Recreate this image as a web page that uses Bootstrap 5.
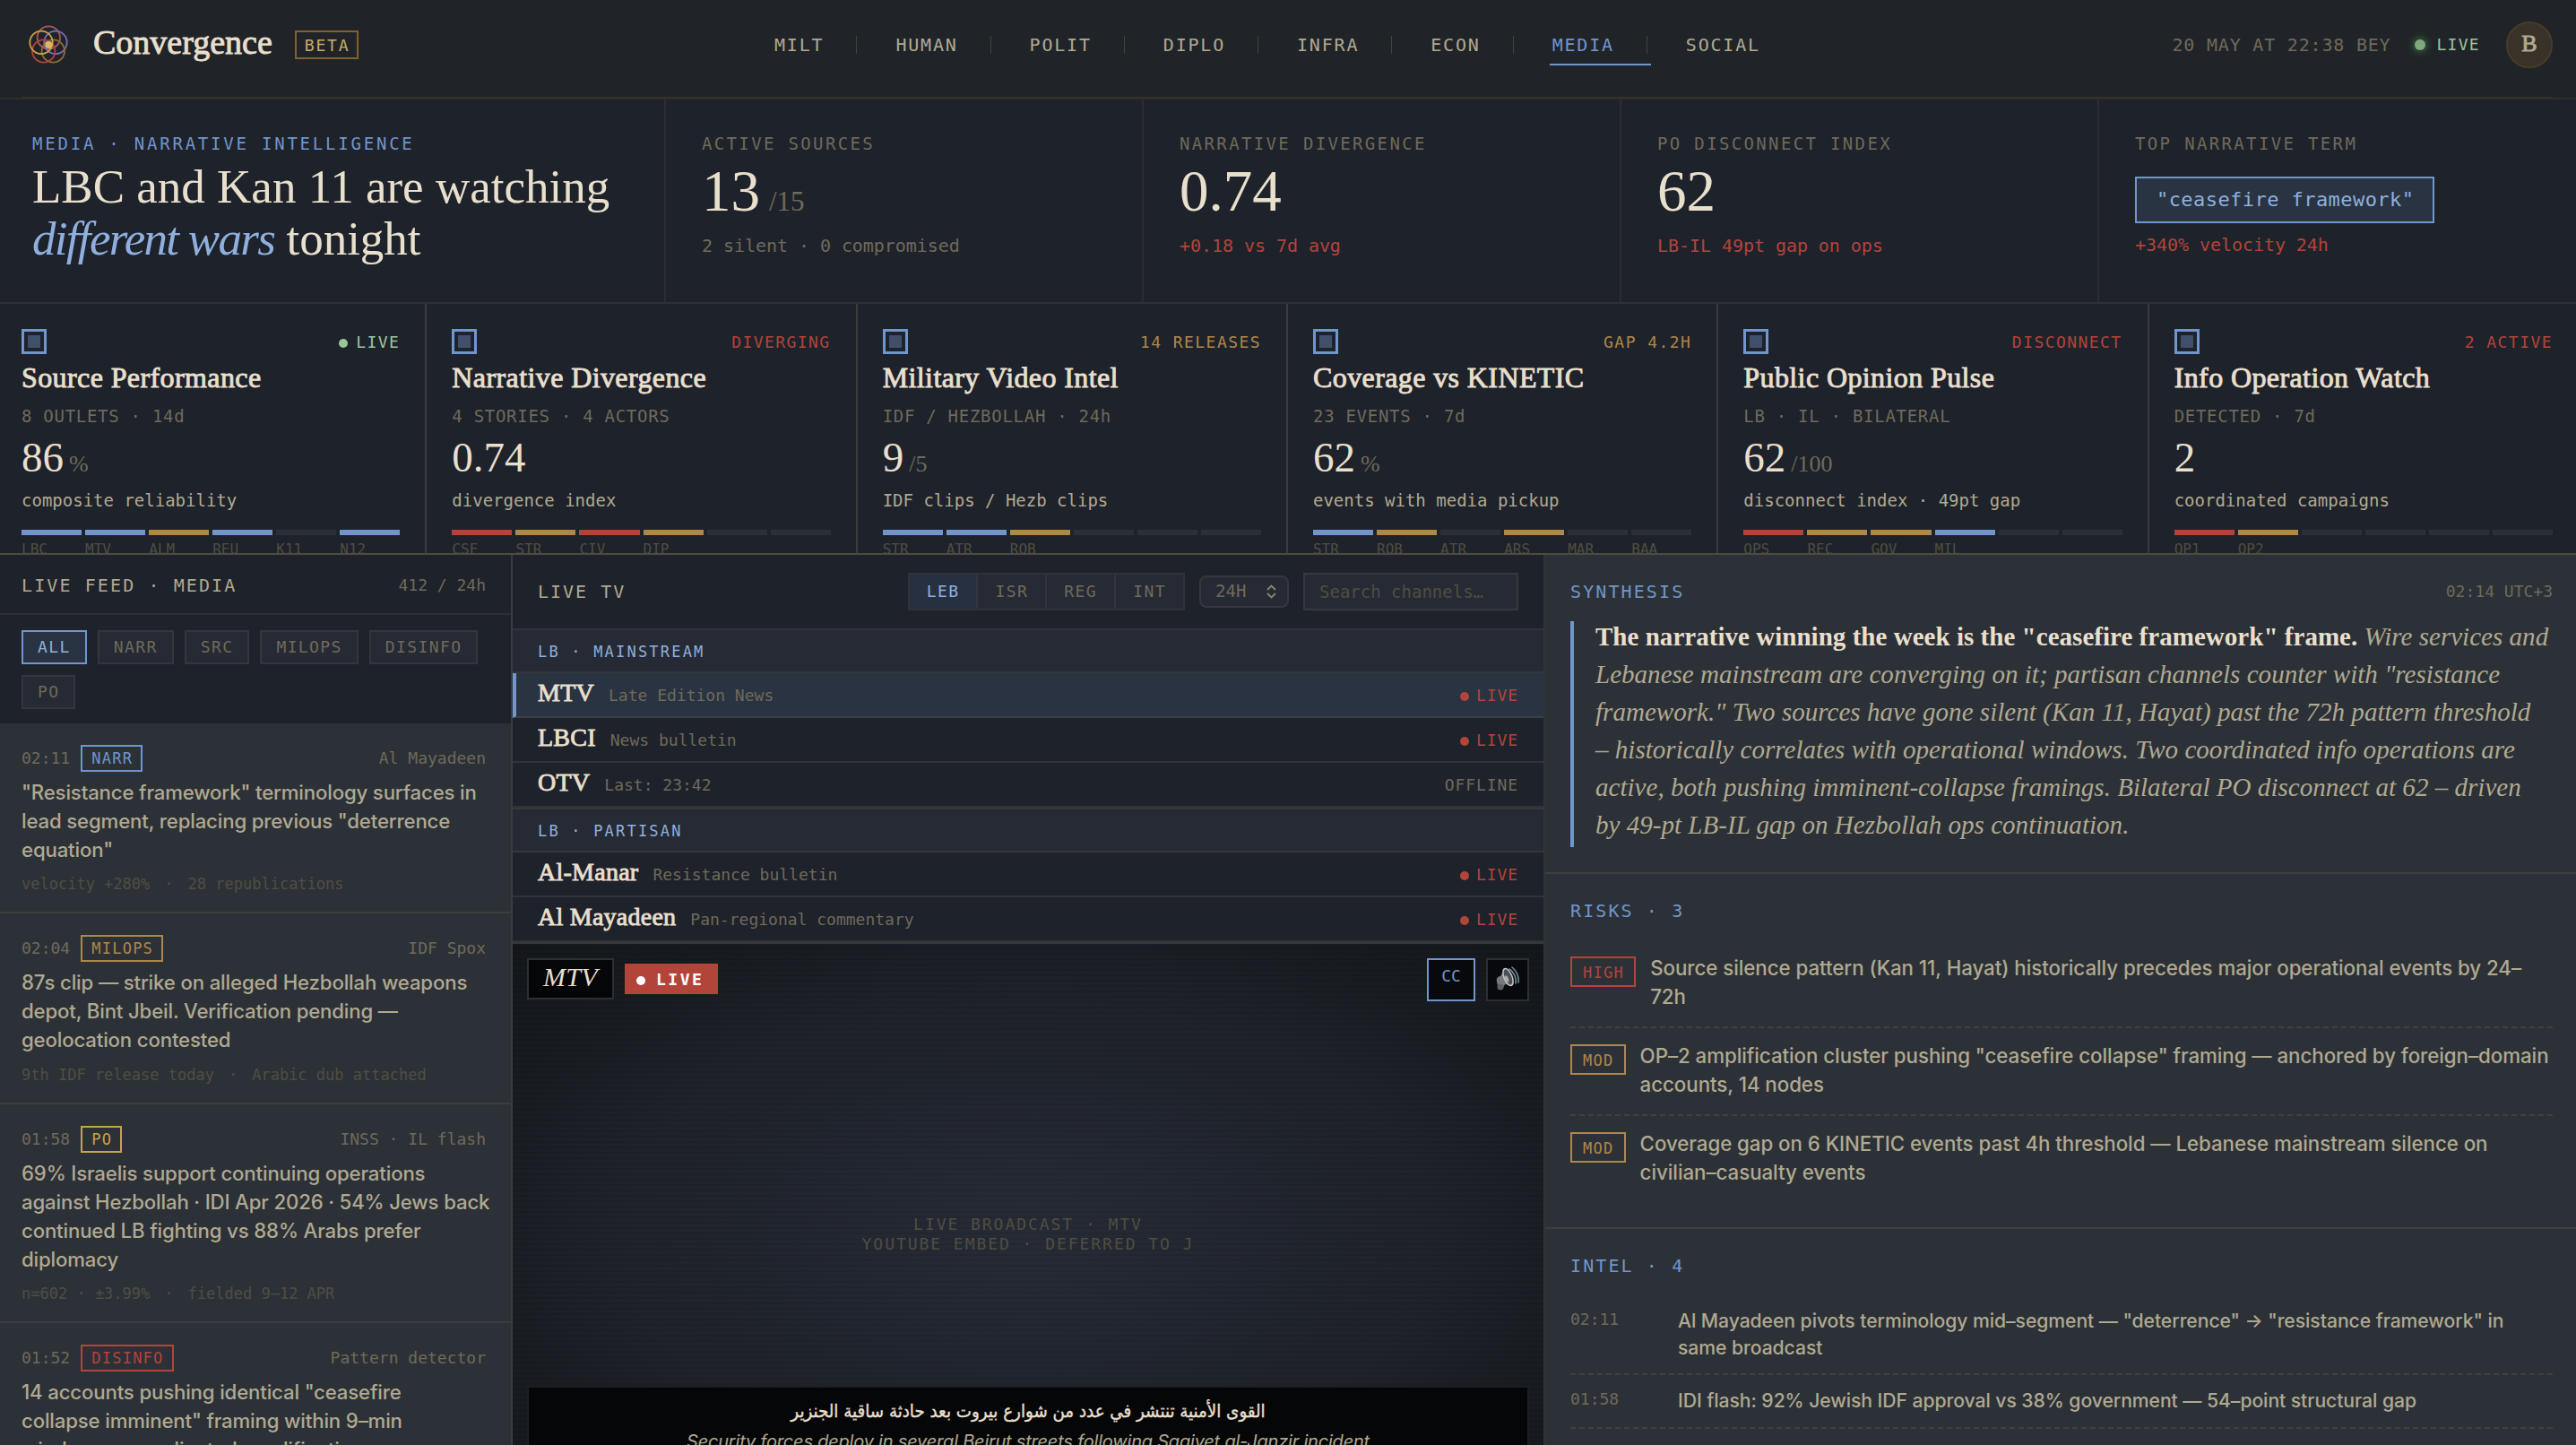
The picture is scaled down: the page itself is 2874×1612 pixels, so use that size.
<!DOCTYPE html>
<html lang="en">
  <head>
    <meta charset="UTF-8" />
    <meta name="viewport" content="width=device-width, initial-scale=1.0" />
    <title>Convergence - Media</title>
    <link
      rel="stylesheet"
      href="https://cdn.jsdelivr.net/npm/bootstrap@5.3.2/dist/css/bootstrap.min.css"
    />
    <style>
      :root {
        --ink: #e8dfcc;
        --soft: #b0a991;
        --dim: #6f6a5a;
        --faint: #504e42;
        --blue: #7096cc;
        --sky: #8fb0de;
        --red: #b3443a;
        --amber: #b0874a;
        --gold: #c9a24a;
        --green: #9cc59a;
        --base: #1e222b;
        --panel: #2c3137;
        --raised: #262a34;
        --line: #323338;
      }
      body {
        height: 1612px;
        overflow: hidden;
        background: var(--base);
        color: var(--soft);
        font-family: "Inter", sans-serif;
      }
      .mono { font-family: "DejaVu Sans Mono", monospace; font-size: 19px; line-height: 20px; white-space: nowrap; }
      .serif { font-family: "Liberation Serif", serif; color: var(--ink); white-space: nowrap; }
      .medium { -webkit-text-stroke: .9px currentColor; }
      .c-dim { color: var(--dim); }
      .c-faint { color: var(--faint); }
      .c-soft { color: var(--soft); }
      .c-blue { color: var(--blue); }
      .c-sky { color: var(--sky); }
      .c-red { color: var(--red); }
      .c-amber { color: var(--amber); }
      .c-gold { color: var(--gold); }
      .c-green { color: var(--green); }

      /* top bar */
      .topbar { height: 111px; background: #202428; border-bottom: 2px solid #2e2c29; padding: 0 26px 10px 24px; position: relative; }
      .topbar::after { content: ""; position: absolute; left: 24px; right: 26px; bottom: 0; height: 1px; background: #38342b; }
      .brand-side { width: 837px; }
      .brand-name { font-size: 38px; line-height: 40px; margin: -5px 0 0 20px; letter-spacing: 0; }
      .beta { font-size: 18px; letter-spacing: 1.8px; color: #c9ad68; border: 2px solid #80622d; height: 32px; line-height: 29px; padding: 0 8px 0 9px; margin-left: 25px; }
      .topnav { gap: 36px; }
      .topnav a { height: 45px; margin-top: 2px; padding: 0 4px 0 3px; font-size: 20px; letter-spacing: 1.8px; color: var(--soft); text-decoration: none; border-bottom: 2px solid transparent; }
      .topnav a i { width: 1px; height: 20px; background: #45413a; margin-left: 36px; }
      .topnav a.on { color: var(--blue); border-color: var(--blue); }
      .pulse { width: 12px; height: 12px; background: #7fa87e; border-radius: 50%; box-shadow: 0 0 10px #4f9350; }
      .avatar { width: 52px; height: 52px; border: 2px solid #473c28; background: #383228; border-radius: 50%; font-size: 26px; line-height: 46px; color: var(--soft); }

      /* hero */
      .hero { height: 228px; border-bottom: 2px solid #2f3035; }
      .hero > div { padding: 39px 0 0 40px; width: 533px; border-right: 2px solid #2b2d33; }
      .hero > div:first-child { width: 743px; padding-left: 36px; }
      .hero > div:last-child { border-right: 0; width: 532px; }
      .kpi-label { letter-spacing: 2.35px; }
      .headline { font-size: 53px; line-height: 58px; margin-top: 9px; letter-spacing: 0; }
      .headline em { color: var(--sky); letter-spacing: -1.7px; }
      .kpi-num { font-size: 65px; line-height: 64px; height: 64px; margin: 11px 0 19px; }
      .kpi-num small { font-size: 31px; line-height: 1; color: var(--dim); margin-left: 10px; }
      .kpi-note { font-size: 20px; letter-spacing: -.05px; }
      .term { display: inline-block; height: 52px; line-height: 47px; font-size: 22px; letter-spacing: .44px; padding: 0 21px 0 22px; border: 2px solid var(--blue); background: #2a3341; color: var(--sky); margin: 27px 0 14px; }

      /* indicator cards */
      .strip { height: 280px; overflow: hidden; padding: 0 26px 0 0; border-bottom: 2px solid #4e4c43; }
      .ind { flex: 1 1 0; padding: 28px 28px 0; border-right: 2px solid #3a3b3d; }
      .ind:first-child { padding-left: 24px; }
      .ind:last-child { padding-right: 0; border: 0; }
      .ind-icon { width: 28px; height: 28px; border: 3px solid var(--blue); padding: 4px; }
      .ind-icon::after { content: ""; display: block; width: 14px; height: 14px; background: #40506b; }
      .ind-status { font-size: 18px; letter-spacing: 1.44px; padding-top: 2px; }
      .dot { display: inline-block; width: 10px; height: 10px; border-radius: 50%; background: currentColor; }
      .ind-title { font-size: 32px; line-height: 32px; margin-top: 10px; letter-spacing: .4px; }
      .ind-sub { letter-spacing: .72px; margin-top: 17px; }
      .ind-num { font-size: 47px; line-height: 48px; height: 48px; margin-top: 12px; }
      .ind-num small { font-size: 26px; line-height: 1; color: var(--dim); margin-left: 6px; }
      .ind-metric { margin: 14px 0 23px; }
      .segs { gap: 4px; }
      .segs > div { flex: 1 1 0; }
      .segs i { display: block; height: 6px; background: #2b2f37; margin-bottom: 8px; }
      .segs i.b { background: var(--blue); }
      .segs i.a { background: var(--amber); }
      .segs i.r { background: var(--red); }
      .segs span { font-size: 16px; line-height: 16px; display: block; }

      /* live feed */
      .feed { width: 572px; height: 993px; border-right: 2px solid #3a3b3d; background: var(--panel); overflow: hidden; }
      .feed-head { height: 67px; padding: 24px 28px 0 24px; border-bottom: 2px solid #2c2e34; background: var(--base); }
      .filters { gap: 12px; padding: 17px 24px 16px; background: var(--base); }
      .filters span { font-size: 18px; letter-spacing: 1.4px; height: 38px; line-height: 34px; padding: 0 16px; border: 2px solid #34363a; background: var(--raised); color: var(--dim); }
      .filters span.on { border-color: var(--blue); background: #2a3341; color: var(--sky); }
      .story { padding: 24px 28px 19px 24px; border-bottom: 2px solid #3c3c3c; }
      .story .mono { font-size: 18px; }
      .story .tag { font-size: 17px; letter-spacing: 1.25px; height: 30px; line-height: 26px; padding: 0 9px 0 10px; border: 2px solid; margin-left: 12px; }
      .story p { font-size: 22.2px; font-weight: 450; line-height: 32.1px; margin: 7px 0 12px; white-space: nowrap; letter-spacing: -.15px; }
      .story .foot { font-size: 17px; line-height: 21px; height: 22px; gap: 16px; }

      /* live tv */
      .tv { width: 1150px; height: 993px; overflow: hidden; }
      .tv-head { height: 84px; border-bottom: 2px solid var(--line); padding: 0 28px; gap: 16px; }
      .seg { border: 2px solid #313236; }
      .seg span { font-size: 18px; letter-spacing: 1.44px; height: 38px; line-height: 37px; padding: 0 19px; background: var(--raised); color: var(--dim); border-right: 2px solid #34353a; }
      .seg span:last-child { border: 0; }
      .seg span.on { background: #273040; color: var(--sky); }
      .range { width: 100px; height: 36px; border: 2px solid #37383c; border-radius: 8px; padding: 0 12px 0 16px; background: var(--raised); }
      .search { width: 240px; height: 42px; line-height: 38px; border: 2px solid #37383b; background: var(--raised); padding-left: 16px; }
      .group-name { height: 48px; padding: 14px 28px 0; font-size: 17px; letter-spacing: 2.2px; background: var(--raised); border-bottom: 2px solid #35363a; }
      .chan { height: 50px; padding: 0 28px; border-bottom: 2px solid var(--line); line-height: 43px; }
      .chan b { font-size: 28px; font-weight: 400; letter-spacing: .25px; }
      .chan .mono { font-size: 18px; line-height: 20px; }
      .chan.on { background: #293342; border-left: 4px solid var(--blue); padding-left: 24px; border-bottom-color: #3a3f45; }
      .group { border-bottom: 2px solid #36373a; }
      .video { height: 647px; position: relative; color: var(--faint);
        background: repeating-linear-gradient(rgba(0,0,0,0) 0 4px, rgba(0,0,0,.08) 4px 6px), radial-gradient(ellipse at center, #272b36 0%, #1e222a 55%, #13161a 100%); }
      .over { position: absolute; }
      .station { left: 16px; top: 16px; height: 46px; width: 97px; border: 2px solid #2e2f33; background: #050608; font-size: 30px; line-height: 38px; text-align: center; font-style: italic; letter-spacing: .4px; }
      .onair { left: 125px; top: 22px; width: 104px; height: 34px; background: var(--red); color: #fff; font-size: 18px; line-height: 35px; letter-spacing: 2.5px; font-weight: 700; padding-left: 13px; }
      .cc { right: 76px; top: 16px; width: 54px; height: 48px; border: 2px solid var(--blue); background: #08090c; color: var(--blue); font-size: 18px; line-height: 36px; text-align: center; }
      .sound { right: 16px; top: 16px; width: 48px; height: 48px; border: 2px solid #2e2f33; background: #08090c; }
      .captions { left: 16px; right: 16px; top: 493px; height: 138px; border: 2px solid #1d1e20; background: #050607; text-align: center; padding-top: 9px; }
      .captions .ar { font-family: "DejaVu Sans Condensed", "DejaVu Sans", sans-serif; font-stretch: condensed; font-size: 20.3px; line-height: 34px; color: var(--ink); -webkit-text-stroke: .4px currentColor; }
      .captions .en { font-size: 20px; letter-spacing: -.2px; line-height: 35px; font-style: italic; color: var(--soft); white-space: nowrap; }

      /* analysis */
      .brief { flex: 1; height: 993px; background: var(--panel); overflow: hidden; border-left: 2px solid #303439; }
      .brief section { border-bottom: 2px solid #3e3e3e; padding: 31px 26px 28px 28px; }
      .sec-name { font-size: 20px; letter-spacing: 2.1px; }
      .quote { border-left: 4px solid var(--blue); padding: 0 0 4px 24px; margin-top: 23px; font-size: 29px; line-height: 42px; }
      .quote p { margin: -4px 0 0; color: var(--soft); letter-spacing: .03px; }
      .quote strong { color: var(--ink); font-weight: 700; font-style: normal; }
      .brief h2 { margin: 0 0 23px; font-weight: 400; }
      .risk { padding: 15px 0 17px; gap: 16px; font-size: 22.3px; line-height: 32px; border-bottom: 2px dashed #3f4041; white-space: nowrap; }
      .risk > div, .note > div { font-weight: 450; letter-spacing: -.05px; }
      .risk:last-child, .note:last-child { border: 0; }
      .risk .mono { font-size: 17px; letter-spacing: 1.3px; height: 34px; line-height: 32px; padding: 0 11px 0 12px; border: 2px solid; margin-top: 3px; }
      .note { padding: 14px 0; font-size: 21.15px; line-height: 29.7px; border-bottom: 2px dashed #3f4041; white-space: nowrap; }
      .note .mono { width: 120px; font-size: 18px; padding-top: 3px; }
    </style>
  </head>
  <body>
    <header class="topbar d-flex align-items-center">
      <div class="brand-side d-flex align-items-center">
        <svg width="60" height="56" viewBox="0 0 60 56" fill="none" stroke-width="1.8" class="flex-shrink-0">
          <circle cx="30.3" cy="20" r="12.7" stroke="#a85a5a" />
          <circle cx="38" cy="25.3" r="12.7" stroke="#7a6bb8" />
          <circle cx="35.3" cy="35" r="12.7" stroke="#8f6a3a" />
          <circle cx="24.7" cy="35" r="12.7" stroke="#b3443a" />
          <circle cx="22" cy="25.3" r="12.7" stroke="#c9a24a" />
          <circle cx="30.3" cy="28" r="4" fill="#d9b866" />
        </svg>
        <div class="serif medium brand-name">Convergence</div>
        <div class="mono beta">BETA</div>
      </div>
      <nav class="topnav d-flex mono">
        <a href="#" class="d-flex align-items-center">MILT<i></i></a>
        <a href="#" class="d-flex align-items-center">HUMAN<i></i></a>
        <a href="#" class="d-flex align-items-center">POLIT<i></i></a>
        <a href="#" class="d-flex align-items-center">DIPLO<i></i></a>
        <a href="#" class="d-flex align-items-center">INFRA<i></i></a>
        <a href="#" class="d-flex align-items-center">ECON<i></i></a>
        <a href="#" class="d-flex align-items-center on">MEDIA<i></i></a>
        <a href="#" class="d-flex align-items-center">SOCIAL</a>
      </nav>
      <div class="ms-auto d-flex align-items-center mono">
        <span class="c-dim" style="font-size: 20px; letter-spacing: .8px">20 MAY AT 22:38 BEY</span>
        <span class="pulse" style="margin: 0 12px 0 27px"></span>
        <span class="c-green" style="font-size: 18px; letter-spacing: 1.3px; margin-right: 29px">LIVE</span>
        <span class="avatar serif medium text-center">B</span>
      </div>
    </header>

    <div class="hero d-flex">
      <div>
        <div class="mono kpi-label c-blue" style="letter-spacing: 2.78px">MEDIA · NARRATIVE INTELLIGENCE</div>
        <div class="serif headline">LBC and Kan 11 are watching<br /><em>different wars</em> tonight</div>
      </div>
      <div>
        <div class="mono kpi-label c-dim">ACTIVE SOURCES</div>
        <div class="serif kpi-num">13<small>/15</small></div>
        <div class="mono kpi-note c-dim">2 silent · 0 compromised</div>
      </div>
      <div>
        <div class="mono kpi-label c-dim">NARRATIVE DIVERGENCE</div>
        <div class="serif kpi-num">0.74</div>
        <div class="mono kpi-note c-red">+0.18 vs 7d avg</div>
      </div>
      <div>
        <div class="mono kpi-label c-dim">PO DISCONNECT INDEX</div>
        <div class="serif kpi-num">62</div>
        <div class="mono kpi-note c-red">LB-IL 49pt gap on ops</div>
      </div>
      <div>
        <div class="mono kpi-label c-dim">TOP NARRATIVE TERM</div>
        <div class="mono term">"ceasefire framework"</div>
        <div class="mono kpi-note c-red">+340% velocity 24h</div>
      </div>
    </div>

    <div class="strip d-flex" id="strip"></div>

    <div class="d-flex">
      <aside class="feed">
        <div class="feed-head d-flex justify-content-between">
          <span class="mono c-soft" style="font-size: 20px; letter-spacing: 2.1px">LIVE FEED · MEDIA</span>
          <span class="mono c-dim" style="font-size: 18px">412 / 24h</span>
        </div>
        <div class="filters d-flex flex-wrap">
          <span class="mono on">ALL</span>
          <span class="mono">NARR</span>
          <span class="mono">SRC</span>
          <span class="mono">MILOPS</span>
          <span class="mono">DISINFO</span>
          <span class="mono">PO</span>
        </div>
        <div id="stories"></div>
      </aside>

      <main class="tv">
        <div class="tv-head d-flex align-items-center">
          <span class="mono c-soft me-auto" style="font-size: 20px; letter-spacing: 2px">LIVE TV</span>
          <div class="seg d-flex">
            <span class="mono on">LEB</span>
            <span class="mono">ISR</span>
            <span class="mono">REG</span>
            <span class="mono">INT</span>
          </div>
          <div class="range d-flex align-items-center justify-content-between">
            <span class="mono c-dim" style="padding-bottom: 3px">24H</span>
            <svg width="11" height="16" viewBox="0 0 11 16" fill="none" stroke="#8a846f" stroke-width="1.8">
              <path d="M1 6 5.5 1.5 10 6M1 10l4.500 4.500L10 10" />
            </svg>
          </div>
          <div class="search mono c-faint">Search channels…</div>
        </div>
        <div id="channels"></div>
        <div class="video d-flex align-items-center justify-content-center">
          <div class="mono text-center" style="font-size: 18px; line-height: 22px; letter-spacing: 1.95px">LIVE BROADCAST · MTV<br />YOUTUBE EMBED · DEFERRED TO J</div>
          <div class="over station serif">MTV</div>
          <div class="over onair mono"><i class="dot" style="margin-right: 12px"></i>LIVE</div>
          <div class="over cc mono">CC</div>
          <div class="over sound d-flex align-items-center justify-content-center">
            <svg width="30" height="30" viewBox="0 0 30 30" fill="none">
              <path d="M3 17 C2 14 4 11 7 11 L12 3 C17 5 21 14 20 21 L12 20 C10 26 5 26 4 22Z" fill="#77797c" />
              <ellipse cx="15.500" cy="12" rx="4.500" ry="10" transform="rotate(-22 15.500 12)" fill="#4c4f53" stroke="#c4c7ca" stroke-width="1.500" />
              <ellipse cx="14" cy="14" rx="2" ry="4" transform="rotate(-22 14 14)" fill="#a9adb1" />
              <path d="M17 3c5 3 8 10 7 16M20 1c5 4 8 11 7 17" stroke="#6f8f98" stroke-width="1.600" stroke-linecap="round" />
              <circle cx="7" cy="23" r="3.500" fill="#5d6064" />
            </svg>
          </div>
          <div class="over captions">
            <div class="ar" lang="ar" dir="rtl">القوى الأمنية تنتشر في عدد من شوارع بيروت بعد حادثة ساقية الجنزير</div>
            <div class="en">Security forces deploy in several Beirut streets following Saqiyet al-Janzir incident</div>
          </div>
        </div>
      </main>

      <aside class="brief">
        <section>
          <div class="d-flex justify-content-between">
            <span class="mono sec-name c-blue">SYNTHESIS</span>
            <span class="mono c-dim" style="font-size: 18px">02:14 UTC+3</span>
          </div>
          <div class="quote serif fst-italic d-flex">
            <p>
              <strong>The narrative winning the week is the "ceasefire framework" frame.</strong> Wire services and<br />
              Lebanese mainstream are converging on it; partisan channels counter with "resistance<br />
              framework." Two sources have gone silent (Kan 11, Hayat) past the 72h pattern threshold<br />
              – historically correlates with operational windows. Two coordinated info operations are<br />
              active, both pushing imminent-collapse framings. Bilateral PO disconnect at 62 – driven<br />
              by 49-pt LB-IL gap on Hezbollah ops continuation.
            </p>
          </div>
        </section>
        <section>
          <h2 class="mono sec-name c-blue">RISKS · 3</h2>
          <div class="risk d-flex align-items-start">
            <span class="mono c-red">HIGH</span>
            <div>Source silence pattern (Kan 11, Hayat) historically precedes major operational events by 24–<br />72h</div>
          </div>
          <div class="risk d-flex align-items-start">
            <span class="mono c-amber">MOD</span>
            <div>OP–2 amplification cluster pushing "ceasefire collapse" framing — anchored by foreign–domain<br />accounts, 14 nodes</div>
          </div>
          <div class="risk d-flex align-items-start">
            <span class="mono c-amber">MOD</span>
            <div>Coverage gap on 6 KINETIC events past 4h threshold — Lebanese mainstream silence on<br />civilian–casualty events</div>
          </div>
        </section>
        <section>
          <h2 class="mono sec-name c-blue">INTEL · 4</h2>
          <div class="note d-flex">
            <span class="mono c-dim">02:11</span>
            <div>Al Mayadeen pivots terminology mid–segment — "deterrence" → "resistance framework" in<br />same broadcast</div>
          </div>
          <div class="note d-flex">
            <span class="mono c-dim">01:58</span>
            <div>IDI flash: 92% Jewish IDF approval vs 38% government — 54–point structural gap</div>
          </div>
          <div class="note"></div>
        </section>
      </aside>
    </div>

    <script src="https://cdn.jsdelivr.net/npm/bootstrap@5.3.2/dist/js/bootstrap.bundle.min.js"></script>
    <script>
      const cards = [
        { title: "Source Performance", status: '<i class="dot" style="margin-right: 9px"></i>LIVE', color: "green", sub: "8 OUTLETS · 14d", num: "86", unit: "%", metric: "composite reliability", bars: "bbab-b", labels: ["LBC", "MTV", "ALM", "REU", "K11", "N12"] },
        { title: "Narrative Divergence", status: "DIVERGING", color: "red", sub: "4 STORIES · 4 ACTORS", num: "0.74", unit: "", metric: "divergence index", bars: "rara--", labels: ["CSF", "STR", "CIV", "DIP"] },
        { title: "Military Video Intel", status: "14 RELEASES", color: "amber", sub: "IDF / HEZBOLLAH · 24h", num: "9", unit: "/5", metric: "IDF clips / Hezb clips", bars: "bba---", labels: ["STR", "ATR", "ROB"] },
        { title: "Coverage vs KINETIC", status: "GAP 4.2H", color: "amber", sub: "23 EVENTS · 7d", num: "62", unit: "%", metric: "events with media pickup", bars: "ba-a--", labels: ["STR", "ROB", "ATR", "ARS", "MAR", "BAA"] },
        { title: "Public Opinion Pulse", status: "DISCONNECT", color: "red", sub: "LB · IL · BILATERAL", num: "62", unit: "/100", metric: "disconnect index · 49pt gap", bars: "raab--", labels: ["OPS", "REC", "GOV", "MIL"] },
        { title: "Info Operation Watch", status: "2 ACTIVE", color: "red", sub: "DETECTED · 7d", num: "2", unit: "", metric: "coordinated campaigns", bars: "ra----", labels: ["OP1", "OP2"] },
      ];
      document.getElementById("strip").innerHTML = cards.map(c => `
        <div class="ind">
          <div class="d-flex justify-content-between align-items-center">
            <div class="ind-icon"></div>
            <div class="mono ind-status c-${c.color}">${c.status}</div>
          </div>
          <div class="serif medium ind-title">${c.title}</div>
          <div class="mono ind-sub c-dim">${c.sub}</div>
          <div class="serif ind-num">${c.num}<small>${c.unit}</small></div>
          <div class="mono ind-metric">${c.metric}</div>
          <div class="segs d-flex">
            ${[...c.bars].map((b, i) => `<div><i class="${b}"></i><span class="mono c-faint">${c.labels[i] || ""}</span></div>`).join("")}
          </div>
        </div>`).join("");

      const stories = [
        { time: "02:11", tag: "NARR", color: "blue", source: "Al Mayadeen", text: ['"Resistance framework" terminology surfaces in', 'lead segment, replacing previous "deterrence', 'equation"'], foot: ["velocity +280%", "28 republications"] },
        { time: "02:04", tag: "MILOPS", color: "amber", source: "IDF Spox", text: ["87s clip — strike on alleged Hezbollah weapons", "depot, Bint Jbeil. Verification pending —", "geolocation contested"], foot: ["9th IDF release today", "Arabic dub attached"] },
        { time: "01:58", tag: "PO", color: "gold", source: "INSS · IL flash", text: ["69% Israelis support continuing operations", "against Hezbollah · IDI Apr 2026 · 54% Jews back", "continued LB fighting vs 88% Arabs prefer", "diplomacy"], foot: ["n=602 · ±3.99%", "fielded 9–12 APR"] },
        { time: "01:52", tag: "DISINFO", color: "red", source: "Pattern detector", text: ['14 accounts pushing identical "ceasefire', 'collapse imminent" framing within 9–min', "window — coordinated amplification"], foot: [] },
      ];
      document.getElementById("stories").innerHTML = stories.map(s => `
        <div class="story">
          <div class="d-flex align-items-center">
            <span class="mono c-dim">${s.time}</span>
            <span class="mono tag c-${s.color}">${s.tag}</span>
            <span class="mono c-dim ms-auto">${s.source}</span>
          </div>
          <p>${s.text.join("<br>")}</p>
          <div class="mono foot c-faint d-flex">${s.foot.map(f => `<span>${f}</span>`).join("<span>·</span>")}</div>
        </div>`).join("");

      const groups = [
        { name: "LB · MAINSTREAM", list: [["MTV", "Late Edition News", true], ["LBCI", "News bulletin", true], ["OTV", "Last: 23:42", false]] },
        { name: "LB · PARTISAN", list: [["Al-Manar", "Resistance bulletin", true], ["Al Mayadeen", "Pan-regional commentary", true]] },
      ];
      document.getElementById("channels").innerHTML = groups.map(g => `
        <div class="group">
          <div class="mono group-name c-sky">${g.name}</div>
          ${g.list.map(([name, show, live]) => `
            <div class="chan d-flex align-items-baseline ${name === "MTV" ? "on" : ""}">
              <b class="serif medium">${name}</b>
              <span class="mono c-dim ms-3">${show}</span>
              ${live
                ? '<span class="mono c-red ms-auto" style="letter-spacing: .9px"><i class="dot" style="margin-right: 8px"></i>LIVE</span>'
                : '<span class="mono c-dim ms-auto" style="letter-spacing: .9px">OFFLINE</span>'}
            </div>`).join("")}
        </div>`).join("");
    </script>
  </body>
</html>
